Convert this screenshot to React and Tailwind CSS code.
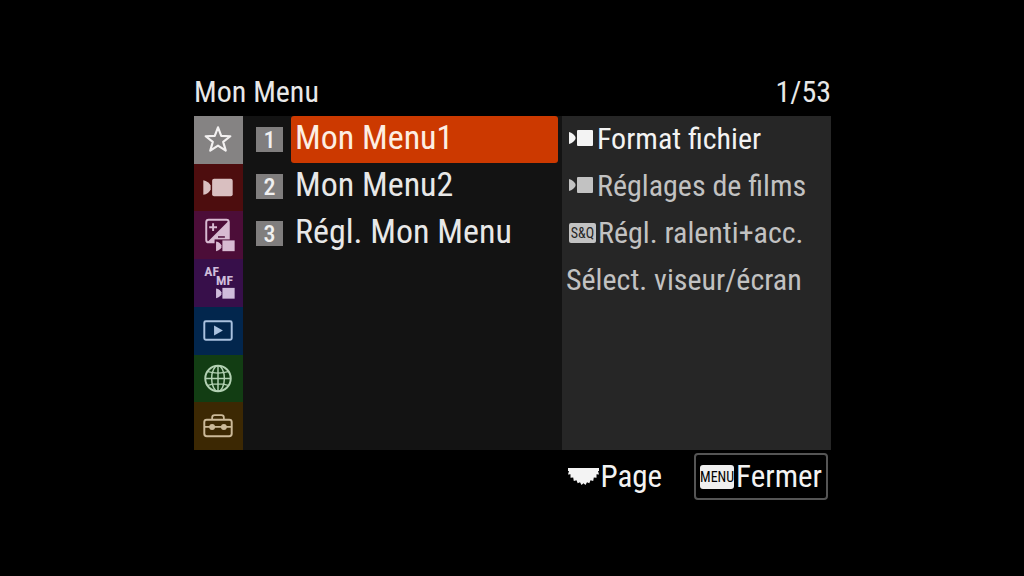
import React, { useState } from 'react';

const MovieIcon = () => (
  <svg className="h-[19px] w-[26px] shrink-0" viewBox="0 0 26 19" fill="currentColor" aria-hidden="true">
    <path d="M0 3c3 .5 5.500 3 6.500 5v2c-1 2-3.500 4.500-6.500 5z" />
    <rect x="8" y="1" width="16" height="16" rx="1" />
  </svg>
);

const DialIcon = () => (
  <svg className="h-5 w-[31px] shrink-0" viewBox="0 0 31 20" fill="currentColor" aria-hidden="true">
    <path d="M0 1h31v3h-1l1 3.500-2.500-.3v3.600l-2.700-.3-.6 3.400-2.700-.7-1.200 3.100-2.300-1.100-1.500 2.800-2-1.800-2 1.800-1.500-2.800-2.300 1.100-1.200-3.100-2.700.7-.6-3.400-2.700.3V7.200L0 7.500 1 4H0z" />
  </svg>
);

const icons = {
  star: (
    <path
      d="M24 11.500l3.300 8.800 9.300.4-7.300 5.700 2.600 9-7.900-5.200-7.900 5.200 2.600-9-7.300-5.700 9.300-.4z"
      fill="none"
      stroke="currentColor"
      strokeWidth="2.200"
      strokeLinejoin="round"
    />
  ),
  shooting: (
    <>
      <path d="M9 16.500c3.500.5 6.500 3 7.500 5.500v4c-1 2.500-4 5-7.500 5.500z" />
      <rect x="18" y="15" width="21" height="18" rx="2" />
    </>
  ),
  exposure: (
    <>
      <rect x="12" y="8" width="23" height="23" rx="2.500" fill="none" stroke="currentColor" strokeWidth="2" />
      <path d="M35 9v22H13z" />
      <path d="M15 15.500h8M19 11.500v8" stroke="currentColor" strokeWidth="2" />
      <path d="M24 25.500h7" stroke="#4c0d38" strokeWidth="1.500" />
      <path d="M20.500 28h21.500v13H20.500z" fill="#4c0d38" />
      <path d="M22 30c3 .5 5 2.500 5.500 4v2c-.5 1.500-2.500 3.500-5.500 4z" />
      <rect x="28.500" y="29" width="12.500" height="11" />
    </>
  ),
  focus: (
    <>
      <text x="10" y="17" fontSize="14" fontWeight="700">AF</text>
      <text x="22" y="27" fontSize="14" fontWeight="700">MF</text>
      <path d="M22 30c3 .5 5 2.500 5.500 4v2c-.5 1.500-2.500 3.500-5.500 4z" />
      <rect x="28.500" y="29.500" width="12.500" height="11" />
    </>
  ),
  playback: (
    <>
      <rect x="10" y="14.500" width="28" height="19" rx="1.500" fill="none" stroke="currentColor" strokeWidth="2" />
      <path d="M20 19l9 5-9 5z" />
    </>
  ),
  network: (
    <g fill="none" stroke="currentColor" strokeWidth="1.500">
      <circle cx="24" cy="24" r="13" strokeWidth="2" />
      <ellipse cx="24" cy="24" rx="6.500" ry="13" />
      <path d="M24 11v26M11 24h26M13.500 17q10.500 3 21 0M13.500 31q10.500-3 21 0" />
    </g>
  ),
  setup: (
    <>
      <g fill="none" stroke="currentColor" strokeWidth="2">
        <rect x="10" y="17" width="28" height="17" rx="2.500" />
        <path d="M18 17v-2q0-2.500 2.500-2.500h7q2.500 0 2.500 2.500v2M10 24.500h28" strokeWidth="1.800" />
      </g>
      <circle cx="18" cy="24.500" r="3" />
      <circle cx="30" cy="24.500" r="3" />
    </>
  ),
};

const tabs = [
  { id: 'star', label: 'Mon Menu', style: 'bg-[#858383] text-[#f3f1f1]' },
  { id: 'shooting', label: 'Prise de vue', style: 'bg-[#4d0d0e] text-[#d9bfc0]' },
  { id: 'exposure', label: 'Exposition', style: 'bg-[#4c0d38] text-[#d8bbd2]' },
  { id: 'focus', label: 'Mise au point', style: 'bg-[#370f4a] text-[#cfbddb]' },
  { id: 'playback', label: 'Lecture', style: 'bg-[#02264d] text-[#a9c1df]' },
  { id: 'network', label: 'Réseau', style: 'bg-[#123d13] text-[#b3d1b3]' },
  { id: 'setup', label: 'Réglage', style: 'bg-[#3c2803] text-[#cbb999]' },
];

const pages = ['Mon Menu1', 'Mon Menu2', 'Régl. Mon Menu'];

const items = [
  { label: 'Format fichier', icon: 'movie' },
  { label: 'Réglages de films', icon: 'movie' },
  { label: 'Régl. ralenti+acc.', icon: 'sq' },
  { label: 'Sélect. viseur/écran', icon: null },
];

const App = () => {
  const [tab, setTab] = useState('star');
  const [page, setPage] = useState(0);

  return (
    <main className="min-h-screen bg-black px-[193px] pt-[72px] font-['Roboto_Condensed',Roboto,sans-serif] text-[#e8e8e8]">
      <header className="flex h-11 items-start justify-between pl-px text-[30px] leading-10">
        <h1>Mon Menu</h1>
        <span>1/53</span>
      </header>

      <div className="flex min-h-[334px] pl-px">
        <nav className="grid w-[49px] shrink-0 grid-rows-7">
          {tabs.map((t) => (
            <button
              key={t.id}
              type="button"
              aria-label={t.label}
              aria-pressed={tab === t.id}
              onClick={() => setTab(t.id)}
              className={`flex items-center ${t.style}`}
            >
              <svg className="h-[47px] w-12" viewBox="0 0 48 48" fill="currentColor" aria-hidden="true">
                {icons[t.id]}
              </svg>
            </button>
          ))}
        </nav>

        <ul className="min-w-0 flex-[319_1_0%] bg-[#131313]">
          {pages.map((label, i) => (
            <li key={label}>
              <button
                type="button"
                onClick={() => setPage(i)}
                className="flex h-[47px] w-full items-center gap-2 pr-1 pl-[13px] text-left"
              >
                <span className="flex h-[25px] w-[27px] shrink-0 items-center justify-center bg-[#807e7e] text-2xl font-medium text-[#f0f0f0]">
                  {i + 1}
                </span>
                <span
                  className={`flex h-full flex-1 items-center rounded-[3px] px-1 pb-1.5 text-[34px] leading-10 whitespace-nowrap ${
                    page === i ? 'bg-[#cc3900] text-[#fdeee2]' : ''
                  }`}
                >
                  {label}
                </span>
              </button>
            </li>
          ))}
        </ul>

        <ul className="min-w-0 flex-[269_1_0%] bg-[#262626] text-[30px] leading-10 whitespace-nowrap">
          {items.map((item, i) => (
            <li key={item.label}>
              <button
                type="button"
                className={`flex h-[47px] w-full items-center gap-0.5 pb-0.5 pl-1 text-left ${
                  i === 0 ? 'text-[#f3f3f3]' : 'text-[#c2c2c2]'
                }`}
              >
                {item.icon && (
                  <span className="flex pl-[3px]">
                    {item.icon === 'movie' ? (
                      <MovieIcon />
                    ) : (
                      <span className="flex h-5 w-[27px] items-center justify-center rounded-xs bg-[#c2c2c2] text-sm text-[#262626]">
                        S&amp;Q
                      </span>
                    )}
                  </span>
                )}
                <span>{item.label}</span>
              </button>
            </li>
          ))}
        </ul>
      </div>

      <footer className="flex justify-end gap-8 pt-[3px] pr-[3px] text-[31px] leading-10 text-[#f3f3f3]">
        <button type="button" className="flex items-center gap-px">
          <DialIcon />
          Page
        </button>
        <button
          type="button"
          className="flex h-[47px] items-center gap-0.5 rounded-sm border-2 border-[#555] px-1"
        >
          <span className="flex h-6 w-[34px] items-center justify-center rounded-[3px] bg-[#efefef] text-sm text-black">
            MENU
          </span>
          Fermer
        </button>
      </footer>
    </main>
  );
};

export default App;
